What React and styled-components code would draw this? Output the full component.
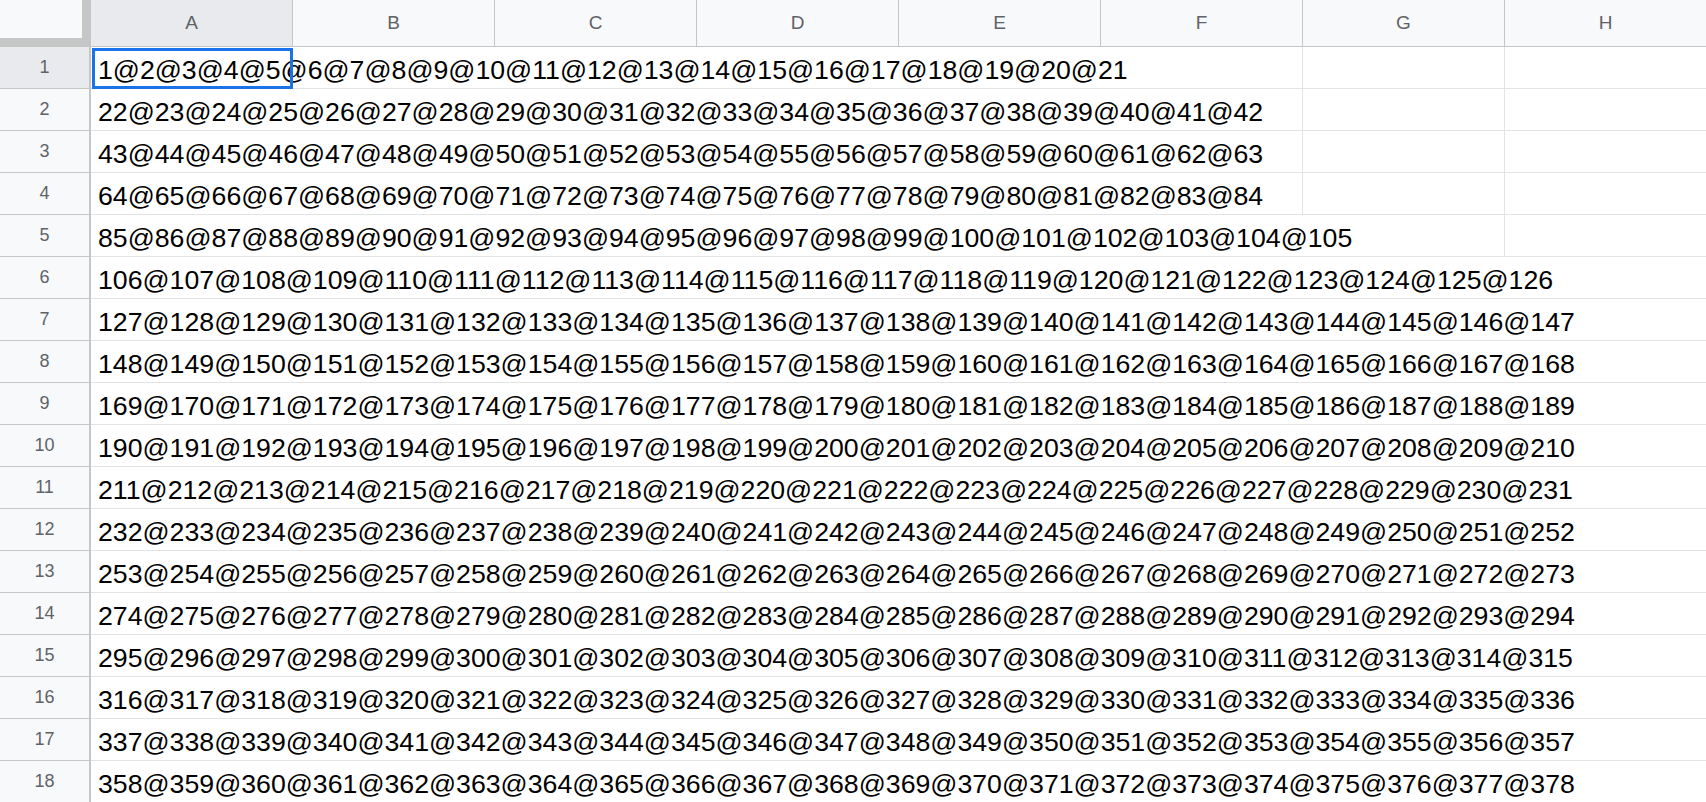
import React from "react";
import styled, { createGlobalStyle } from "styled-components";

const COLUMNS = ["A", "B", "C", "D", "E", "F", "G", "H"];
const ROW_COUNT = 18;
const COL_WIDTH = 202;
const ROW_HEAD_WIDTH = 91;
const FONT_SIZE = 26.7;

const rows = Array.from({ length: ROW_COUNT }, (_, r) =>
  Array.from({ length: 21 }, (_, i) => r * 21 + i + 1).join("@")
);

// rough Arial metrics, enough to know how many cells the text overflows
const textSpan = (text) => {
  let em = 0;
  for (const ch of text) em += ch === "@" ? 1.015 : 0.556;
  const width = 7 + em * FONT_SIZE;
  return Math.min(COLUMNS.length, Math.ceil(width / COL_WIDTH));
};

const GlobalStyle = createGlobalStyle`
  body {
    margin: 0;
    background: #ffffff;
    overflow: hidden;
    font-family: "Liberation Sans", Arial, sans-serif;
  }
`;

const Sheet = styled.div`
  display: flex;
  flex-direction: column;
  width: 1706px;
  height: 802px;
  overflow: hidden;
`;

const HeaderRow = styled.div`
  display: grid;
  grid-template-columns: ${ROW_HEAD_WIDTH}px repeat(${COLUMNS.length}, ${COL_WIDTH}px);
  height: 47px;
  flex: none;
`;

const Corner = styled.div`
  box-sizing: border-box;
  background: #f8f9fa;
  border-right: 9px solid #c4c7c5;
  border-bottom: 9px solid #c4c7c5;
`;

const ColHeader = styled.div`
  box-sizing: border-box;
  display: flex;
  align-items: center;
  justify-content: center;
  background: ${(p) => (p.$active ? "#e8eaed" : "#f8f9fa")};
  border-right: 1px solid #c4c7c5;
  border-bottom: 1px solid #c4c7c5;
  color: #5f6368;
  font-size: 19px;
`;

const Row = styled.div`
  display: grid;
  grid-template-columns: ${ROW_HEAD_WIDTH}px repeat(${COLUMNS.length}, ${COL_WIDTH}px);
  height: 42px;
  flex: none;
`;

const RowHeader = styled.div`
  box-sizing: border-box;
  display: flex;
  align-items: center;
  justify-content: center;
  background: ${(p) => (p.$active ? "#e8eaed" : "#f8f9fa")};
  border-right: 2px solid #c4c7c5;
  border-bottom: 1px solid #c4c7c5;
  color: #5f6368;
  font-size: 18px;
`;

const Cell = styled.div`
  box-sizing: border-box;
  position: relative;
  display: flex;
  align-items: flex-end;
  grid-column: span ${(p) => p.$span || 1};
  padding: 0 0 2px 7px;
  background: #ffffff;
  border-right: 1px solid #e2e3e3;
  border-bottom: 1px solid #e2e3e3;
  color: #000000;
  font-size: ${FONT_SIZE}px;
  white-space: nowrap;
`;

const Selection = styled.div`
  position: absolute;
  left: 1px;
  top: 1px;
  width: 201px;
  height: 41px;
  box-sizing: border-box;
  border: 3px solid #1a73e8;
  pointer-events: none;
`;

export default function App() {
  return (
    <>
      <GlobalStyle />
      <Sheet>
        <HeaderRow>
          <Corner />
          {COLUMNS.map((c) => (
            <ColHeader key={c} $active={c === "A"}>
              {c}
            </ColHeader>
          ))}
        </HeaderRow>
        {rows.map((text, i) => {
          const span = textSpan(text);
          return (
            <Row key={i}>
              <RowHeader $active={i === 0}>{i + 1}</RowHeader>
              <Cell $span={span}>
                {text}
                {i === 0 && <Selection />}
              </Cell>
              {Array.from({ length: COLUMNS.length - span }, (_, j) => (
                <Cell key={j} />
              ))}
            </Row>
          );
        })}
      </Sheet>
    </>
  );
}
